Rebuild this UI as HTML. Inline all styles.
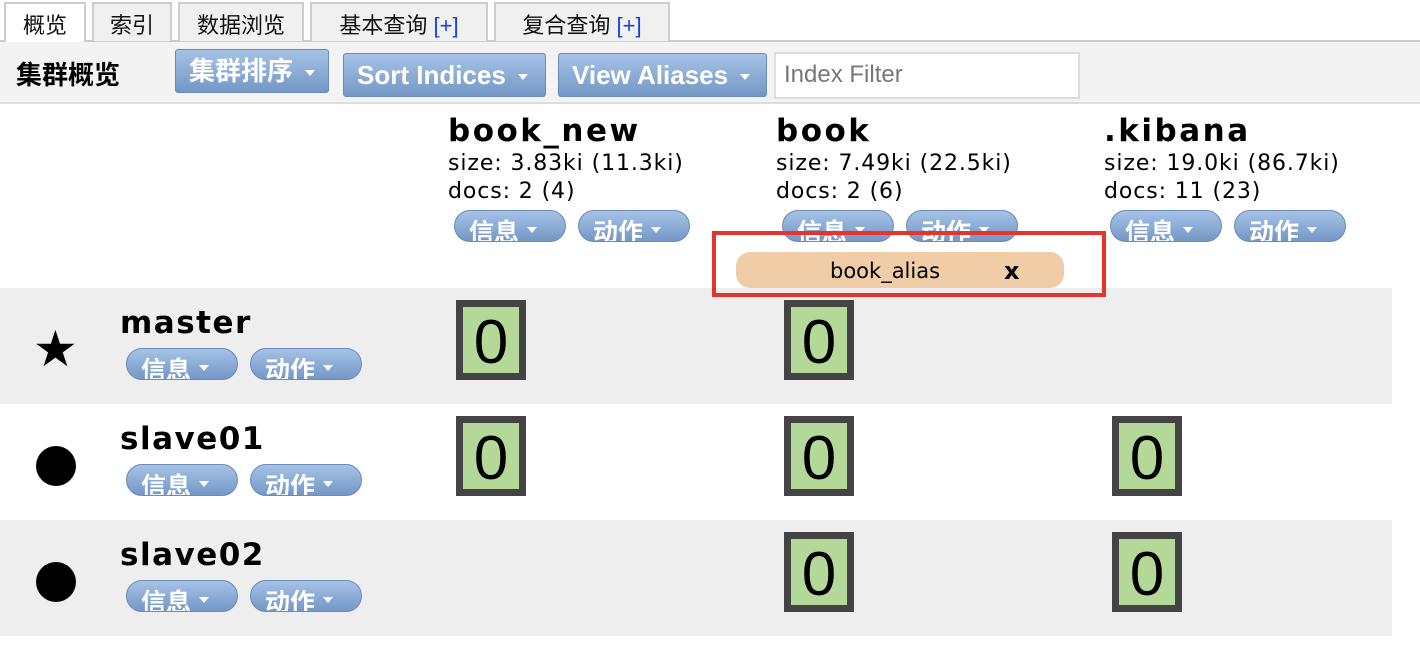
<!DOCTYPE html>
<html><head><meta charset="utf-8"><style>
*{margin:0;padding:0;box-sizing:border-box}
body{width:1420px;height:646px;background:#fff;font-family:"Liberation Sans","Noto Sans CJK SC",sans-serif;position:relative;overflow:hidden}
.a{position:absolute}
.tab{position:absolute;top:2px;height:39px;border:2px solid #ccc;border-bottom:none;background:#f0f0f0;font-size:22px;line-height:44px;text-align:center;color:#111}
.tab b{font-weight:normal;color:#1a3fe0}
.btn{position:absolute;top:49px;height:44px;border:1px solid #6a8cbb;border-radius:3px;background:linear-gradient(#a6c3e6,#7497c6);color:#fff;font-weight:bold;font-size:26px;line-height:42px;padding-left:13px}
.caret{display:inline-block;width:0;height:0;border-left:5px solid transparent;border-right:5px solid transparent;border-top:6px solid #fff;vertical-align:middle;margin-left:12px}
.pill{position:absolute;width:112px;height:32px;border:1px solid #6a8cbb;border-radius:16px;background:linear-gradient(#a6c3e6,#7497c6);color:#fff;font-weight:bold;font-size:25px;line-height:44px;padding-left:14px;overflow:hidden}
.pill .caret{margin-left:8px;margin-top:-8px}
.idx{position:absolute;top:112px;font-family:"DejaVu Sans",sans-serif;font-size:22px;letter-spacing:0.9px;line-height:28px;color:#000}
.idx h2{font-size:31px;letter-spacing:2.5px;line-height:38px;font-weight:bold}
.row{position:absolute;left:0;width:1392px;height:116px}
.nm{position:absolute;left:120px;font-family:"DejaVu Sans",sans-serif;font-size:31px;letter-spacing:1.5px;font-weight:bold}
.sh{position:absolute;width:70px;height:80px;border:7px solid #444;background:#b3d898;font-family:"Liberation Sans",sans-serif;font-size:62px;line-height:72px;text-align:center;color:#000}
</style></head><body>
<div class="a" style="left:0;top:40px;width:1420px;height:2px;background:#ccc"></div>
<div class="tab" style="left:4px;width:82px;background:#fff;height:41px">概览</div>
<div class="tab" style="left:92px;width:80px">索引</div>
<div class="tab" style="left:178px;width:126px">数据浏览</div>
<div class="tab" style="left:310px;width:178px">基本查询 <b>[+]</b></div>
<div class="tab" style="left:494px;width:176px">复合查询 <b>[+]</b></div>
<div class="a" style="left:0;top:42px;width:1420px;height:62px;background:#f3f3f3;border-bottom:2px solid #ddd"></div>
<div class="a" style="left:16px;top:55px;font-size:26px;font-weight:bold">集群概览</div>
<div class="btn" style="left:175px;width:154px;top:49px">集群排序<span class="caret"></span></div>
<div class="btn" style="left:343px;width:203px;top:53px">Sort Indices<span class="caret"></span></div>
<div class="btn" style="left:558px;width:209px;top:53px">View Aliases<span class="caret"></span></div>
<div class="a" style="left:774px;top:52px;width:306px;height:47px;border:2px solid #ddd;background:#fff;font-size:24px;color:#777;line-height:42px;padding-left:8px">Index Filter</div>

<div class="idx" style="left:448px"><h2>book_new</h2>size: 3.83ki (11.3ki)<br>docs: 2 (4)</div>
<div class="idx" style="left:776px"><h2>book</h2>size: 7.49ki (22.5ki)<br>docs: 2 (6)</div>
<div class="idx" style="left:1104px"><h2>.kibana</h2>size: 19.0ki (86.7ki)<br>docs: 11 (23)</div>
<div class="pill" style="left:454px;top:210px">信息<span class="caret"></span></div>
<div class="pill" style="left:578px;top:210px">动作<span class="caret"></span></div>
<div class="pill" style="left:782px;top:210px">信息<span class="caret"></span></div>
<div class="pill" style="left:906px;top:210px">动作<span class="caret"></span></div>
<div class="pill" style="left:1110px;top:210px">信息<span class="caret"></span></div>
<div class="pill" style="left:1234px;top:210px">动作<span class="caret"></span></div>
<div class="a" style="left:736px;top:252px;width:328px;height:36px;border-radius:14px;background:#f0cda6;font-family:'DejaVu Sans',sans-serif;font-size:21px;line-height:38px"><span class="a" style="left:94px">book_alias</span><span class="a" style="left:268px;font-weight:bold;font-size:24px">x</span></div>

<div class="row" style="top:288px;background:#eee"></div>
<div class="row" style="top:404px;background:#fff"></div>
<div class="row" style="top:520px;background:#eee"></div>
<div class="a" style="left:712px;top:231px;width:394px;height:66px;border:4px solid #e3352b"></div>

<div class="a" style="left:33px;top:324px;font-family:'DejaVu Sans',sans-serif;font-size:50px;line-height:50px">★</div>
<div class="a" style="left:36px;top:446px;width:40px;height:40px;border-radius:50%;background:#000"></div>
<div class="a" style="left:36px;top:562px;width:40px;height:40px;border-radius:50%;background:#000"></div>
<div class="nm" style="top:305px">master</div>
<div class="nm" style="top:421px">slave01</div>
<div class="nm" style="top:537px">slave02</div>
<div class="pill" style="left:126px;top:348px">信息<span class="caret"></span></div>
<div class="pill" style="left:250px;top:348px">动作<span class="caret"></span></div>
<div class="pill" style="left:126px;top:464px">信息<span class="caret"></span></div>
<div class="pill" style="left:250px;top:464px">动作<span class="caret"></span></div>
<div class="pill" style="left:126px;top:580px">信息<span class="caret"></span></div>
<div class="pill" style="left:250px;top:580px">动作<span class="caret"></span></div>

<div class="sh" style="left:456px;top:300px">0</div>
<div class="sh" style="left:784px;top:300px">0</div>
<div class="sh" style="left:456px;top:416px">0</div>
<div class="sh" style="left:784px;top:416px">0</div>
<div class="sh" style="left:1112px;top:416px">0</div>
<div class="sh" style="left:784px;top:532px">0</div>
<div class="sh" style="left:1112px;top:532px">0</div>
</body></html>
